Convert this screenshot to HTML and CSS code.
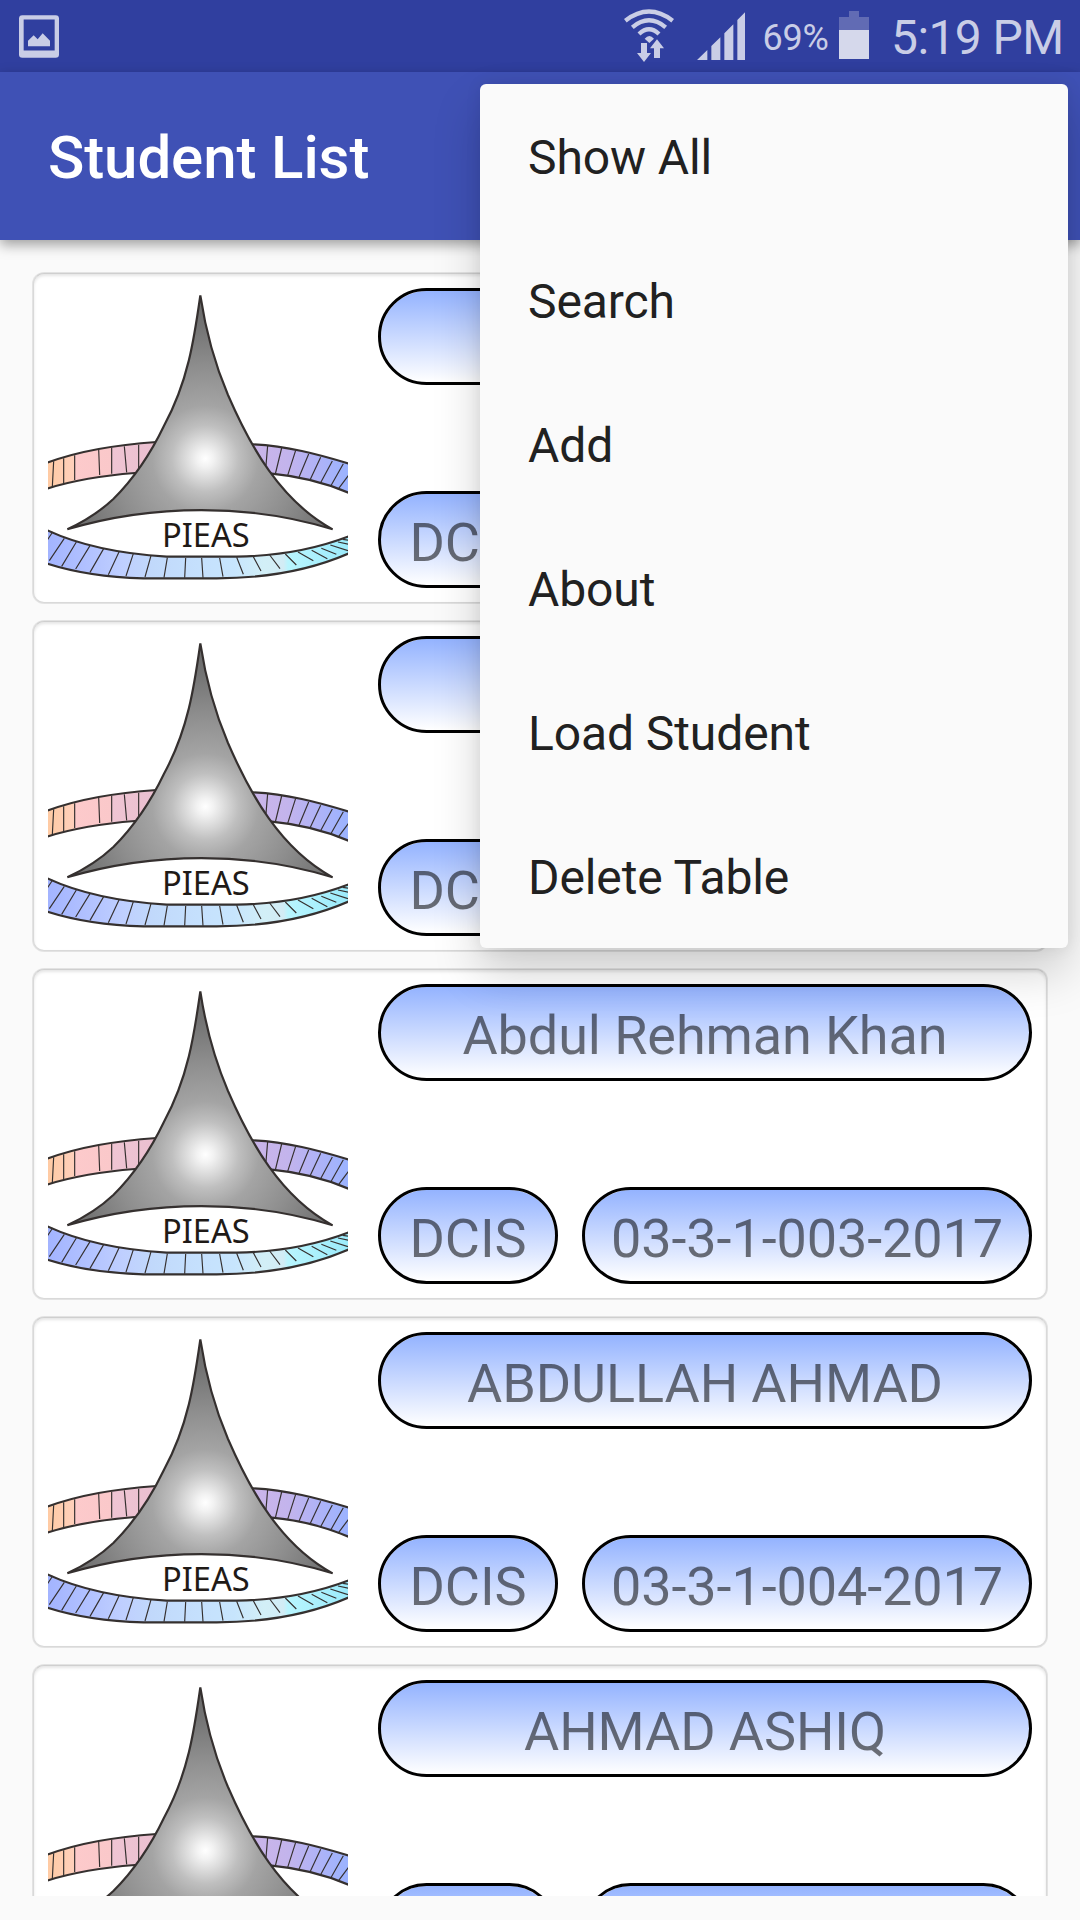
FILE: index.html
```html
<!DOCTYPE html>
<html lang="en">
<head>
<meta charset="utf-8">
<title>Student List</title>
<link rel="stylesheet" href="styles.css">
</head>
<body>
<svg class="defs" width="0" height="0" aria-hidden="true">
  <defs>
    <radialGradient id="cone" gradientUnits="userSpaceOnUse" cx="556" cy="584" r="500">
      <stop offset="0" stop-color="#fff"/>
      <stop offset=".05" stop-color="#f2f2f2"/>
      <stop offset=".2" stop-color="#bfbfbf"/>
      <stop offset=".32" stop-color="#a4a4a4"/>
      <stop offset=".55" stop-color="#8e8e8e"/>
      <stop offset=".8" stop-color="#737373"/>
      <stop offset="1" stop-color="#666"/>
    </radialGradient>
    <linearGradient id="ringTop" gradientUnits="userSpaceOnUse" x1="84" y1="0" x2="984" y2="0">
      <stop offset="0" stop-color="#ffcba4"/>
      <stop offset=".088" stop-color="#ffd0bc"/>
      <stop offset=".09" stop-color="#fdcacb"/>
      <stop offset=".21" stop-color="#fac8ca"/>
      <stop offset=".213" stop-color="#efc5d3"/>
      <stop offset=".37" stop-color="#eabfd0"/>
      <stop offset=".68" stop-color="#cbb5e9"/>
      <stop offset=".8" stop-color="#c3b4ec"/>
      <stop offset=".88" stop-color="#b3b3f5"/>
      <stop offset="1" stop-color="#9bb3ff"/>
    </linearGradient>
    <linearGradient id="ringBottom" gradientUnits="userSpaceOnUse" x1="84" y1="0" x2="984" y2="0">
      <stop offset="0" stop-color="#a3b4ff"/>
      <stop offset=".12" stop-color="#b0c0ff"/>
      <stop offset=".25" stop-color="#bfcfff"/>
      <stop offset=".35" stop-color="#c1d9fb"/>
      <stop offset=".5" stop-color="#c5e0fd"/>
      <stop offset=".62" stop-color="#c7e5fd"/>
      <stop offset=".72" stop-color="#d2eff7"/>
      <stop offset=".785" stop-color="#d2ecf5"/>
      <stop offset=".8" stop-color="#b8f5fe"/>
      <stop offset="1" stop-color="#9cebfb"/>
    </linearGradient>
    <symbol id="pieas" viewBox="84 72 900 900">
      <g fill="none" stroke="#35302f" stroke-width="6.5">
        <path fill="url(#ringTop)" d="M74 599C165 564 290 542 410 534L700 541C800 546 890 569 994 601V690C920 657 840 637 755 629L345 627C245 635 155 650 74 676Z"/>
        <path stroke-width="3.5" d="M101 592L97 668M131 583V659M164 574V648M236 556L239 633M275 551V629M313 547L320 625M356 542V622M743 545L738 604M785 552L766 630M827 559L803 634M866 570L837 640M902 580L870 648M937 591L901 658M970 599L931 668M992 625L954 676"/>
        <path fill="url(#ringBottom)" d="M74 795C175 844 300 869 440 878H650C780 876 890 855 994 814V865C885 914 755 943 590 943H370C245 939 145 920 74 896Z"/>
        <path stroke-width="3.5" d="M98 804L80 831M133 823L88 890M169 834L125 907M210 845L167 915M251 854L210 925M298 862L265 932M340 869L318 936M393 875L375 939M442 881L432 941M497 882L494 941M545 882L549 941M599 882L609 938M650 880L670 931M700 878L723 921M749 873L780 914M796 870L829 903M834 864L880 890M875 859L922 884M904 853L949 871M931 843L984 860M954 834L990 842M968 826L990 829"/>
        <path fill="url(#cone)" stroke-linejoin="bevel" d="M541 94C554 180 578 285 624 393C690 545 780 710 938 796C690 719 400 719 142 796Q225 757 280 705Q370 615 432 485C505 352 523 220 541 94Z"/>
      </g>
      <text class="logo-text" x="426" y="850" textLength="263" lengthAdjust="spacingAndGlyphs">PIEAS</text>
    </symbol>
  </defs>
</svg>

<div class="screen">
  <header class="status-bar">
    <svg class="icon-picture" viewBox="57 44 120 128">
      <path fill="#c9cde6" fill-rule="evenodd" d="M67 44H167Q177 44 177 54V162Q177 172 167 172H67Q57 172 57 162V54Q57 44 67 44ZM71 57V150H164V57Z"/>
      <path fill="#c9cde6" d="M84 121L101 104L113 116L128 98L150 121V137H84Z"/>
    </svg>
    <div class="status-right">
      <svg class="icon-wifi" viewBox="72 24 150 162">
        <g fill="none" stroke="#c9cde6" stroke-width="13">
          <path d="M76 62Q147 7 218 62"/>
          <path d="M97 82Q147 40 197 82"/>
          <path d="M117 102Q147 74 177 102"/>
        </g>
        <path fill="#c9cde6" d="M134 116Q148 100 162 116L148 129ZM123 129H141V159H153L132 186L111 159H123ZM171 118L192 145H180V174H162V145H150Z"/>
      </svg>
      <svg class="icon-signal" viewBox="290 36 146 144">
        <path fill="#c9cde6" d="M290 180L321 150V180ZM333 180V138L360 112V180ZM372 180V100L399 73V180ZM411 180V60L435 36V180Z"/>
      </svg>
      <span class="battery-level">69%</span>
      <svg class="icon-battery" viewBox="717 33 90 144">
        <path fill="#616bb4" d="M747 33H777V51H807V90H717V51H747Z"/>
        <path fill="#d5d8eb" d="M717 90H807V177H717Z"/>
      </svg>
      <span class="clock">5:19 PM</span>
    </div>
  </header>

  <div class="toolbar"><h1 class="title">Student List</h1></div>

  <main class="list">
    <article class="card">
      <svg class="logo"><use href="#pieas"/></svg>
      <div class="details">
        <div class="pill name"></div>
        <div class="row"><div class="pill dept">DCIS</div><div class="pill reg"></div></div>
      </div>
    </article>
    <article class="card">
      <svg class="logo"><use href="#pieas"/></svg>
      <div class="details">
        <div class="pill name"></div>
        <div class="row"><div class="pill dept">DCIS</div><div class="pill reg"></div></div>
      </div>
    </article>
    <article class="card">
      <svg class="logo"><use href="#pieas"/></svg>
      <div class="details">
        <div class="pill name">Abdul Rehman Khan</div>
        <div class="row"><div class="pill dept">DCIS</div><div class="pill reg">03-3-1-003-2017</div></div>
      </div>
    </article>
    <article class="card">
      <svg class="logo"><use href="#pieas"/></svg>
      <div class="details">
        <div class="pill name">ABDULLAH AHMAD</div>
        <div class="row"><div class="pill dept">DCIS</div><div class="pill reg">03-3-1-004-2017</div></div>
      </div>
    </article>
    <article class="card">
      <svg class="logo"><use href="#pieas"/></svg>
      <div class="details">
        <div class="pill name">AHMAD ASHIQ</div>
        <div class="row"><div class="pill dept"></div><div class="pill reg"></div></div>
      </div>
    </article>
  </main>

  <nav class="menu">
    <div class="menu-item">Show All</div>
    <div class="menu-item">Search</div>
    <div class="menu-item">Add</div>
    <div class="menu-item">About</div>
    <div class="menu-item">Load Student</div>
    <div class="menu-item">Delete Table</div>
  </nav>
</div>
</body>
</html>
```
FILE: styles.css
```css
* { box-sizing: border-box; }

body {
  margin: 0;
  background: #fafafa;
  font-family: Roboto, "Liberation Sans", sans-serif;
}

.defs { position: absolute; }

.screen {
  position: relative;
  display: flex;
  flex-direction: column;
  width: 1080px;
  height: 1920px;
  padding-bottom: 24px;
  overflow: hidden;
}

.status-bar {
  flex: none;
  display: flex;
  justify-content: space-between;
  align-items: flex-start;
  height: 72px;
  padding: 0 17px 0 19px;
  background: #303f9f;
  color: #c9cde6;
}

.icon-picture { width: 40px; height: 43px; margin-top: 14.5px; }
.status-right { display: flex; align-items: flex-start; }
.icon-wifi { width: 50px; height: 54px; margin-top: 8px; }
.icon-signal { width: 48.7px; height: 48px; margin: 12px 0 0 22.7px; }
.battery-level { width: 66px; margin: 17px 0 0 17px; font-size: 36px; line-height: 42px; letter-spacing: -.2px; white-space: nowrap; }
.icon-battery { width: 30px; height: 48px; margin: 11px 0 0 10.6px; }
.clock { width: 172px; margin: 9px 0 0 22px; font-size: 48px; line-height: 58px; letter-spacing: -.6px; white-space: nowrap; }

.toolbar {
  flex: none;
  position: relative;
  z-index: 1;
  display: flex;
  align-items: center;
  height: 168px;
  padding: 2px 0 0 48px;
  background: #3f51b5;
  box-shadow: 0 5px 12px rgba(0, 0, 0, .36);
}

.title { margin: 0; color: #fff; font-size: 60px; font-weight: 500; letter-spacing: -.1px; }

.list {
  flex: 1;
  min-height: 0;
  display: flex;
  flex-direction: column;
  gap: 18px;
  padding: 33px 33px 0;
  overflow: hidden;
}

.card {
  flex: none;
  display: flex;
  gap: 30px;
  height: 330px;
  padding: 14px;
  border: 1px solid #d9d9d9;
  border-top-color: #cfcfcf;
  border-radius: 11px;
  background: #fff;
  box-shadow: inset 0 2px 3px rgba(0, 0, 0, .1), 0 0 0 1px rgba(0, 0, 0, .09);
}

.logo { flex: none; width: 300px; height: 300px; }
.logo-text { font-family: "Noto Sans", "Open Sans", sans-serif; font-size: 99px; fill: #1f1a17; }

.details { flex: 1; display: flex; flex-direction: column; justify-content: space-between; }
.row { display: flex; gap: 24px; }

.pill {
  height: 97px;
  border: 3px solid #000;
  border-radius: 49px;
  background: linear-gradient(#94b3ff, #fff) padding-box;
  color: rgba(0, 0, 0, .54);
  font-size: 54px;
  line-height: 98px;
  letter-spacing: -.1px;
  text-align: center;
  white-space: nowrap;
}

.dept { width: 180px; }
.reg { flex: 1; }

.menu {
  position: absolute;
  z-index: 2;
  top: 84px;
  left: 480px;
  width: 588px;
  height: 864px;
  border-radius: 6px;
  background: #fafafa;
  box-shadow: 0 24px 48px rgba(0, 0, 0, .18), 0 0 16px rgba(0, 0, 0, .08);
}

.menu-item {
  display: flex;
  align-items: center;
  height: 144px;
  padding: 2px 0 0 48px;
  color: #212121;
  font-size: 48px;
  letter-spacing: -.1px;
}
```
